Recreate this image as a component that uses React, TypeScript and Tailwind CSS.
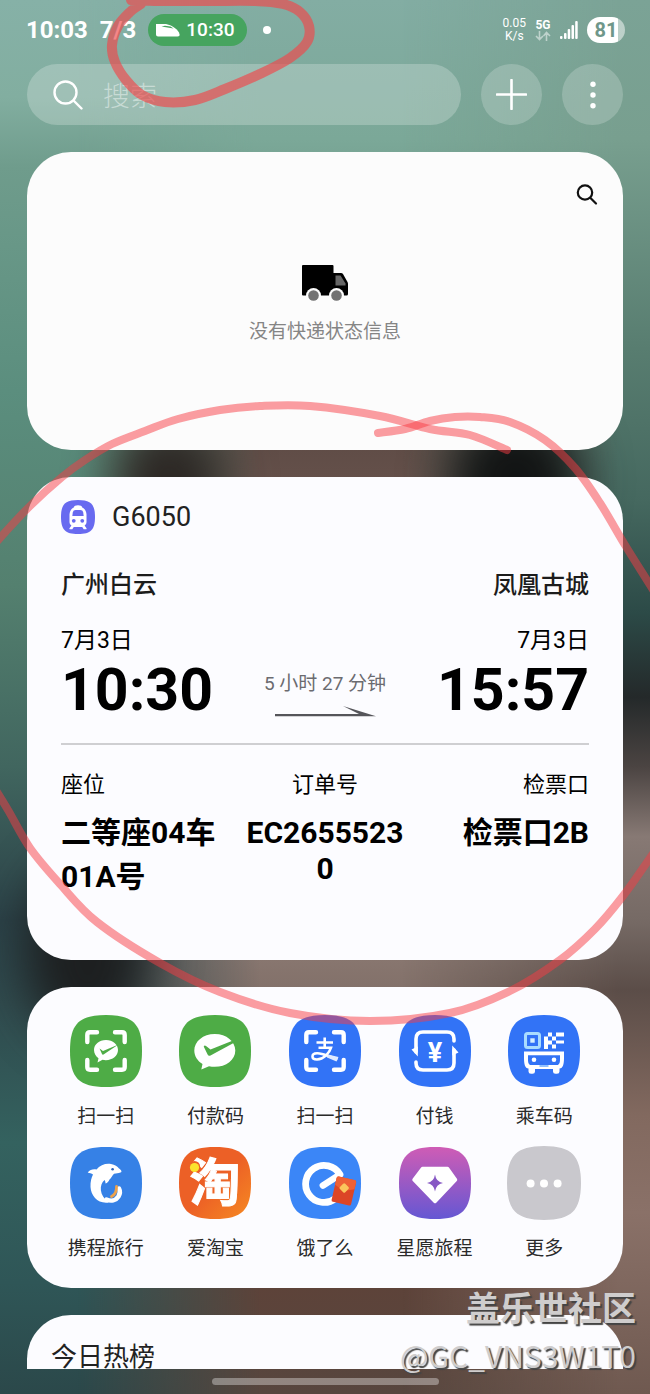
import type { ReactNode } from "react";

function Wallpaper() {
  return (
    <svg
      aria-hidden="true"
      className="absolute inset-0 -z-10 h-full w-full"
      viewBox="0 0 650 1394"
      preserveAspectRatio="none"
    >
      <defs>
        <linearGradient id="wl" x1="0" y1="0" x2="0" y2="1">
          <stop offset="0" stopColor="#86b1a7" />
          <stop offset=".07" stopColor="#82aea0" />
          <stop offset=".12" stopColor="#6f9c8c" />
          <stop offset=".28" stopColor="#5b8e7e" />
          <stop offset=".42" stopColor="#54806f" />
          <stop offset=".55" stopColor="#41665f" />
          <stop offset=".66" stopColor="#2b4248" />
          <stop offset=".72" stopColor="#304b4e" />
          <stop offset=".82" stopColor="#34625f" />
          <stop offset=".92" stopColor="#2f5657" />
          <stop offset="1" stopColor="#2b484a" />
        </linearGradient>
        <linearGradient id="wc" x1="0" y1="0" x2="0" y2="1">
          <stop offset="0" stopColor="#83ada3" />
          <stop offset=".1" stopColor="#7ba898" />
          <stop offset=".22" stopColor="#5f8777" />
          <stop offset=".3" stopColor="#5c4a44" />
          <stop offset=".36" stopColor="#67524c" />
          <stop offset=".68" stopColor="#8a7871" />
          <stop offset=".73" stopColor="#7d6c65" />
          <stop offset=".9" stopColor="#5f4238" />
          <stop offset="1" stopColor="#57463e" />
        </linearGradient>
        <linearGradient id="wr" x1="0" y1="0" x2="0" y2="1">
          <stop offset="0" stopColor="#7ba396" />
          <stop offset=".1" stopColor="#789f8f" />
          <stop offset=".25" stopColor="#587d70" />
          <stop offset=".36" stopColor="#45685f" />
          <stop offset=".44" stopColor="#2c4a47" />
          <stop offset=".5" stopColor="#24292a" />
          <stop offset=".55" stopColor="#4b4442" />
          <stop offset=".6" stopColor="#877974" />
          <stop offset=".66" stopColor="#766a65" />
          <stop offset=".71" stopColor="#5b4d48" />
          <stop offset=".8" stopColor="#82695f" />
          <stop offset=".87" stopColor="#8a7168" />
          <stop offset="1" stopColor="#6f5950" />
        </linearGradient>
        <linearGradient id="mcg">
          <stop offset=".12" stopColor="#000" />
          <stop offset=".4" stopColor="#fff" />
        </linearGradient>
        <linearGradient id="mrg">
          <stop offset=".62" stopColor="#000" />
          <stop offset=".95" stopColor="#fff" />
        </linearGradient>
        <mask id="mc">
          <rect width="650" height="1394" fill="url(#mcg)" />
        </mask>
        <mask id="mr">
          <rect width="650" height="1394" fill="url(#mrg)" />
        </mask>
        <filter id="soft" x="-100%" y="-100%" width="300%" height="300%" colorInterpolationFilters="sRGB">
          <feGaussianBlur stdDeviation="24" />
        </filter>
      </defs>
      <rect width="650" height="1394" fill="url(#wl)" />
      <rect width="650" height="1394" fill="url(#wc)" mask="url(#mc)" />
      <rect width="650" height="1394" fill="url(#wr)" mask="url(#mr)" />
      <g filter="url(#soft)">
        <ellipse cx="515" cy="480" rx="66" ry="70" fill="#121414" />
        <ellipse cx="170" cy="480" rx="56" ry="60" fill="#2c2724" />
        <ellipse cx="88" cy="950" rx="62" ry="90" fill="#1d1f20" />
      </g>
    </svg>
  );
}

type Point = [number, number];

/** Catmull-Rom curve through every point, as cubic segments. */
function smooth(points: Point[]) {
  let d = `M${points[0][0]} ${points[0][1]}`;
  for (let i = 0; i < points.length - 1; i++) {
    const p0 = points[i - 1] ?? points[i];
    const p1 = points[i];
    const p2 = points[i + 1];
    const p3 = points[i + 2] ?? p2;
    d += `C${p1[0] + (p2[0] - p0[0]) / 6} ${p1[1] + (p2[1] - p0[1]) / 6} ${p2[0] - (p3[0] - p1[0]) / 6} ${p2[1] - (p3[1] - p1[1]) / 6} ${p2[0]} ${p2[1]}`;
  }
  return d;
}

const pillLoop: Point[] = [
  [131, 0], [160, 1], [210, 1], [255, 1], [283, 4], [300, 12], [309, 26], [307, 42], [290, 58],
  [262, 73], [225, 89], [195, 100], [165, 102], [142, 95], [126, 80], [115, 62], [112, 45], [118, 26], [130, 12], [141, 4],
];

const ticketStrokes: Point[][] = [
  [[507, 450], [470, 435], [430, 429], [380, 416], [310, 406], [260, 406], [220, 410], [178, 419], [145, 431], [112, 444], [85, 460], [62, 477], [30, 506], [0, 538], [-8, 548]],
  [[378, 433], [405, 429], [430, 421], [455, 417], [480, 417], [510, 422], [545, 440], [575, 468], [600, 503], [625, 545], [650, 585], [658, 598]],
  [[-8, 784], [8, 810], [30, 848], [60, 884], [97, 922], [160, 963], [220, 992], [290, 1013], [370, 1021], [450, 1013], [510, 991], [560, 960], [595, 929], [623, 896], [650, 858], [658, 846]],
];

function Annotations() {
  return (
    <svg
      aria-hidden="true"
      className="pointer-events-none absolute inset-0 z-10 h-full w-full"
      viewBox="0 0 650 1394"
      preserveAspectRatio="none"
      fill="none"
      strokeLinecap="round"
      strokeLinejoin="round"
    >
      <path d={smooth(pillLoop)} stroke="#f0484a" strokeOpacity=".66" strokeWidth="10" />
      {ticketStrokes.map((points, i) => (
        <path key={i} d={smooth(points)} stroke="#f83c43" strokeOpacity=".5" strokeWidth="8" />
      ))}
    </svg>
  );
}

const SQUIRCLE =
  "M0 36C0 9 9 0 36 0S72 9 72 36 63 72 36 72 0 63 0 36Z";

function Tile({ fill, children }: { fill: string; children: ReactNode }) {
  return (
    <svg
      aria-hidden="true"
      viewBox="0 0 72 72"
      className="size-[72px] overflow-visible"
      fill="none"
    >
      <path d={SQUIRCLE} fill={fill} />
      {children}
    </svg>
  );
}

function Brackets() {
  return (
    <path
      d="M27 17.3H20Q17.3 17.3 17.3 20V27M45 17.3H52Q54.7 17.3 54.7 20V27M27 54.7H20Q17.3 54.7 17.3 52V45M45 54.7H52Q54.7 54.7 54.7 52V45"
      stroke="#fff"
      strokeWidth="4.4"
      strokeLinecap="round"
    />
  );
}

const icons = {
  wechatScan: (
    <Tile fill="#4eac46">
      <Brackets />
      <path d="M36 25C29 25 24 29.500 24 35C24 38.500 26 41.500 28.500 43.200L27.500 47.500L32.500 44.800C41 46.500 48 41.500 48 35C48 29.500 43 25 36 25Z" fill="#fff" />
      <path d="M29.500 33.500L33 36L48.500 29.500L33.500 39.500Q32.500 40 32 39Z" fill="#4eac46" />
    </Tile>
  ),
  wechatPay: (
    <Tile fill="#4eac46">
      <path d="M35.800 19C24 19 15.300 26.500 15.300 35.500C15.300 41 18.500 46 23.500 49L22.300 54.500L30 51.300C44 54 56.300 46.500 56.300 35.500C56.300 26.500 47.500 19 35.800 19Z" fill="#fff" />
      <path d="M24.700 31.500Q25.500 30 27 31L31.500 34.500L54 25.500L55.500 27.500L31.500 40.500Q29.500 41.500 28.600 39.500Z" fill="#4eac46" />
    </Tile>
  ),
  alipayScan: (
    <Tile fill="#3273f6">
      <Brackets />
      <path
        d="M27.500 27.500H44M35.700 22.500V32.500M29.500 32.700H42C40.500 38 34.500 44.500 28 44.500C22 44.500 22 38.500 28 38.300C34 38 40 42 48.500 44"
        stroke="#fff"
        strokeWidth="2.600"
      />
      <path d="M39 39.500L49.500 42L47.500 46.500L38 42.500Z" fill="#dfeaff" />
    </Tile>
  ),
  alipayPay: (
    <Tile fill="#3273f6">
      <g stroke="#fff" strokeWidth="3.600" strokeLinecap="round">
        <path d="M17 37V24Q17 17 24 17H48Q55 17 55 24V26" />
        <path d="M55 35V48Q55 55 48 55H24Q17 55 17 48V47" />
      </g>
      <path d="M18.800 41.500L12.500 34.500L18.800 31.500ZM53.200 30.500L59.500 37.500L53.200 40.500Z" fill="#fff" />
      <text x="36" y="46.500" textAnchor="middle" fill="#fff" fontSize="27" fontWeight="700" fontFamily="Roboto, sans-serif">
        ¥
      </text>
    </Tile>
  ),
  busCode: (
    <Tile fill="#3273f6">
      <rect x="17.500" y="18.500" width="14" height="14" rx="2" stroke="#a9dcff" strokeWidth="3" />
      <rect x="22.300" y="23.300" width="4.400" height="4.400" fill="#d5efff" />
      <path
        d="M40 17.500H44V21.500H40ZM48 17.500H56V21.500H48ZM44 21.500H48V25.500H44ZM36 21.500H40V34H36ZM40 25.500H44V29.500H40ZM48 25.500H56V28.500H48ZM44 29.500H48V33.500H44Z"
        fill="#fff"
      />
      <path
        fillRule="evenodd"
        d="M16 36.500H56V43C56 49 55 53.500 51.500 53.500V56.500Q51.500 58.800 49 58.800H47.500Q45 58.800 45 56.500V54H27V56.500Q27 58.800 24.500 58.800H23Q20.500 58.800 20.500 56.500V53.500C17 53.500 16 49 16 43ZM20 40.200V44C20 47.500 20.600 50 23 50H49C51.400 50 52 47.500 52 44V40.200Z"
        fill="#fff"
      />
      <circle cx="26" cy="44.800" r="2.300" fill="#fff" />
      <circle cx="46" cy="44.800" r="2.300" fill="#fff" />
      <rect x="31.500" y="50" width="9" height="2" fill="#8fc0ff" />
    </Tile>
  ),
  ctrip: (
    <Tile fill="#3681e6">
      <path
        d="M17.700 25.500C20 22.500 23 22 26.500 22.500C30 18 36 16 41 17C45 17.600 47.500 19.500 49 21.500C51.500 23 52.300 25 50.500 25.500C48 26.500 46.500 26 44 26.800C42 29 41.500 31 39.500 32.500C38.500 34.500 37.500 36 35.500 36.500C35.500 34.500 35 33.500 34.500 33C29 38 29 48 38.500 55.500C28 57 21 49 20.500 40C20.300 34.500 21.500 30.500 23 27.500C21.500 26.500 19.500 26 17.700 25.500Z"
        fill="#fff"
      />
      <path d="M36.500 52.500C41 54.500 46 53.500 48.500 49.500C50 47 50.300 44 49 41.500" stroke="#fff" strokeWidth="4.500" strokeLinecap="round" />
      <path d="M46.500 39.500C46.800 44 45 47.500 41.500 49.500" stroke="#eda24c" strokeWidth="2.800" strokeLinecap="round" />
      <circle cx="42.600" cy="22.300" r="1.300" fill="#2b62b8" />
    </Tile>
  ),
  taobao: (
    <Tile fill="url(#tb)">
      <defs>
        <linearGradient id="tb" x1="0" y1="0" x2="1" y2="1">
          <stop offset=".5" stopColor="#ec6026" />
          <stop offset="1" stopColor="#f68a22" />
        </linearGradient>
      </defs>
      <text
        x="36"
        y="54"
        textAnchor="middle"
        fill="#fff"
        stroke="#fff"
        strokeWidth="1"
        fontSize="51"
        fontWeight="700"
        fontFamily="'Noto Sans CJK SC', sans-serif"
      >
        淘
      </text>
      <circle cx="15.500" cy="19.500" r="5.600" fill="#ec6026" />
      <circle cx="15.500" cy="20.500" r="4.600" fill="#fbe32d" />
    </Tile>
  ),
  eleme: (
    <Tile fill="#3b86f7">
      <path d="M34 38.500L51 27.500A18.500 18.500 0 1 0 46.500 51.500" stroke="#fff" strokeWidth="6.800" strokeLinecap="round" strokeLinejoin="round" />
      <g transform="rotate(13 55 43.500)">
        <rect x="45" y="31" width="20" height="26" rx="1.800" fill="#dc4526" />
        <path d="M45 33Q45 31 47 31H63Q65 31 65 33V40L55 44L45 40Z" fill="#ee6136" />
        <rect x="51" y="37.500" width="7.500" height="7.500" rx="1.500" fill="#fbc65c" transform="rotate(32 55 41)" />
      </g>
    </Tile>
  ),
  starTrip: (
    <Tile fill="url(#st)">
      <defs>
        <linearGradient id="st" x1="0" y1="0" x2="0" y2="1">
          <stop offset="0" stopColor="#cf5cb5" />
          <stop offset="1" stopColor="#6557d3" />
        </linearGradient>
      </defs>
      <path d="M23.500 21.500H48.500L56.500 32.800L36 54.500L15 32.800Z" fill="#fff" stroke="#fff" strokeWidth="3.500" strokeLinejoin="round" />
      <path d="M36 27.500Q37 34.800 44 36Q37 37.200 36 44.500Q35 37.200 28 36Q35 34.800 36 27.500Z" fill="#8758c4" />
    </Tile>
  ),
  more: (
    <Tile fill="none">
      <path d={SQUIRCLE} fill="#c9c8cd" stroke="#c9c8cd" strokeWidth="2" />
      <circle cx="22.600" cy="36.500" r="4" fill="#fff" />
      <circle cx="36" cy="36.500" r="4" fill="#fff" />
      <circle cx="49.600" cy="36.500" r="4" fill="#fff" />
    </Tile>
  ),
};

const shortcuts: { label: string; icon: ReactNode }[] = [
  { label: "扫一扫", icon: icons.wechatScan },
  { label: "付款码", icon: icons.wechatPay },
  { label: "扫一扫", icon: icons.alipayScan },
  { label: "付钱", icon: icons.alipayPay },
  { label: "乘车码", icon: icons.busCode },
  { label: "携程旅行", icon: icons.ctrip },
  { label: "爱淘宝", icon: icons.taobao },
  { label: "饿了么", icon: icons.eleme },
  { label: "星愿旅程", icon: icons.starTrip },
  { label: "更多", icon: icons.more },
];

function StatusBar() {
  return (
    <header className="flex h-[60px] items-center justify-between pr-[25px] pl-[26px] text-white">
      <div className="flex items-center gap-3 text-2xl font-bold">
        <span>10:03</span>
        <span>7/3</span>
        <span className="flex h-8 items-center gap-1.5 rounded-full bg-[#46a45f] pr-3 pl-2 text-[19px] font-medium">
          <svg aria-hidden="true" viewBox="0 0 24 13" className="h-[13px] w-6" fill="#fff">
            <path d="M0 0H10C17 1.500 22 5.500 23.500 10Q24 12.500 21.500 12.500H2Q0 12.500 0 10.500Z" />
            <path d="M5.500 2.500L17.500 4.600L14.500 2.600L9 1.800Z" fill="#46a45f" />
          </svg>
          10:30
        </span>
        <span className="ml-1 size-2 rounded-full bg-white" />
      </div>
      <div className="flex items-center gap-[9px]">
        <span className="text-center text-xs leading-[13px]">
          0.05
          <br />
          K/s
        </span>
        <span className="flex flex-col items-center text-xs leading-3 font-bold">
          5G
          <svg aria-hidden="true" viewBox="0 0 16 10" className="h-2.5 w-4" fill="none" stroke="#fff" strokeOpacity=".5" strokeWidth="1.600">
            <path d="M4.500 0V8.500M1 5L4.500 8.500L8 5M11.500 10V1.500M8.500 5L11.500 1.500L15 5" />
          </svg>
        </span>
        <svg aria-hidden="true" viewBox="0 0 18 18" className="size-[18px]" fill="#fff">
          <rect x="0" y="15" width="2.500" height="3" rx="1" />
          <rect x="4" y="12" width="2.500" height="6" rx="1" />
          <rect x="7.700" y="8" width="2.500" height="10" rx="1" />
          <rect x="11.500" y="4" width="2.500" height="14" rx="1" />
          <rect x="15.200" y="0" width="2.500" height="18" rx="1" />
        </svg>
        <span className="flex h-[26px] w-[38px] items-center justify-center rounded-full bg-linear-to-r from-white from-82% to-white/50 to-82% text-xl font-bold text-[#6f978a]">
          81
        </span>
      </div>
    </header>
  );
}

function SearchRow() {
  return (
    <div className="flex gap-5 pt-1">
      <div className="flex h-[61px] min-w-0 flex-1 items-center gap-5 rounded-full bg-white/23 pr-6 pl-[26px]">
        <svg aria-hidden="true" viewBox="0 0 30 30" className="size-[30px] shrink-0" fill="none" stroke="#fff" strokeWidth="2.400" strokeLinecap="round">
          <circle cx="12.500" cy="12.500" r="11" />
          <path d="M20.500 20.500L28.500 28.500" />
        </svg>
        <input
          type="search"
          aria-label="搜索"
          placeholder="搜索"
          className="h-11 min-w-0 flex-1 bg-transparent pt-1 text-[27px] font-light text-white outline-none placeholder:text-white/45"
        />
      </div>
      <button type="button" aria-label="添加" className="flex size-[61px] items-center justify-center rounded-full bg-white/20">
        <svg aria-hidden="true" viewBox="0 0 31 31" className="size-[31px]" stroke="#fff" strokeWidth="2.600" strokeLinecap="round">
          <path d="M15.500 1V30M1 15.500H30" />
        </svg>
      </button>
      <button type="button" aria-label="更多选项" className="flex size-[61px] items-center justify-center rounded-full bg-white/20">
        <svg aria-hidden="true" viewBox="0 0 6 28" className="h-7 w-1.5" fill="#fff">
          <circle cx="3" cy="3.300" r="2.700" />
          <circle cx="3" cy="14" r="2.700" />
          <circle cx="3" cy="24.700" r="2.700" />
        </svg>
      </button>
    </div>
  );
}

function ParcelCard() {
  return (
    <section className="flex min-h-[298px] flex-col rounded-[44px] bg-[#fcfcfc] px-6 pt-[31px]">
      <button type="button" aria-label="查询快递" className="self-end">
        <svg aria-hidden="true" viewBox="0 0 24 24" className="size-6" fill="none" stroke="#111" strokeWidth="2.200" strokeLinecap="round">
          <circle cx="10" cy="9.500" r="7.200" />
          <path d="M15.500 15L21 20.500" />
        </svg>
      </button>
      <div className="flex flex-col items-center gap-3.5 pt-[57px]">
        <svg aria-hidden="true" viewBox="0 0 47 38" className="h-[38px] w-[47px]">
          <path d="M0 2Q0 1 1 1H30.500Q31.500 1 31.500 2V9H39Q40.300 9 41 10L45.500 18Q46 19 46 20V30Q46 31.500 44.500 31.500H1Q0 31.500 0 30.500Z" fill="#000" />
          <path d="M33.500 11.500H38.500L43.500 19.500V21.500H33.500Z" fill="#666" />
          <circle cx="11.500" cy="31.500" r="7.500" fill="#fcfcfc" />
          <circle cx="34.500" cy="31.500" r="7.500" fill="#fcfcfc" />
          <circle cx="11.500" cy="31.500" r="5.300" fill="#737373" />
          <circle cx="34.500" cy="31.500" r="5.300" fill="#737373" />
        </svg>
        <p className="text-[19px] leading-8 text-[#858585]">没有快递状态信息</p>
      </div>
    </section>
  );
}

function TrainCard() {
  return (
    <section className="min-h-[483px] rounded-[44px] bg-[#fcfcff] px-[34px] pt-[22px] pb-12 text-black">
      <h2 className="flex items-center gap-[17px] text-[27px] leading-9 text-[#222]">
        <svg aria-hidden="true" viewBox="0 0 72 72" className="size-[34px]">
          <path d={SQUIRCLE} fill="#686af0" />
          <path
            fillRule="evenodd"
            d="M36 11Q44 11 45 16Q53 20 54 30V47Q54 52 50 54L54 60Q55 62 52 62H48L45 57H27L24 62H20Q17 62 18 60L22 54Q18 52 18 47V30Q19 20 27 16Q28 11 36 11ZM25 26Q24 34 24 34H48Q48 34 47 26Q46 21 41 21H31Q26 21 25 26Z"
            fill="#fff"
          />
          <circle cx="27" cy="44" r="4" fill="#686af0" />
          <circle cx="45" cy="44" r="4" fill="#686af0" />
        </svg>
        G6050
      </h2>
      <div className="flex justify-between pt-8 text-2xl leading-9 font-medium text-[#1c1c1c]">
        <span>广州白云</span>
        <span>凤凰古城</span>
      </div>
      <div className="flex items-end justify-between pt-[22px]">
        <div>
          <p className="text-[23px] leading-8">7月3日</p>
          <p className="text-[59px] leading-[66px] font-bold">10:30</p>
        </div>
        <div className="flex flex-col items-center gap-2 pb-1.5 text-[#6b6b70]">
          <span className="text-[19px] leading-7">5 小时 27 分钟</span>
          <svg aria-hidden="true" viewBox="0 0 101 11" className="h-[11px] w-[101px]" fill="#55555a">
            <path d="M0 8H84L68 0L101 10.200H0Z" />
          </svg>
        </div>
        <div className="text-right">
          <p className="text-[23px] leading-8">7月3日</p>
          <p className="text-[59px] leading-[66px] font-bold">15:57</p>
        </div>
      </div>
      <hr className="mt-5 border-t-2 border-[#cfcfd2]" />
      <dl className="grid grid-cols-[160px_1fr_160px] pt-6">
        <div>
          <dt className="text-[22px] leading-8">座位</dt>
          <dd className="pt-2.5 text-[30px] leading-11 font-bold">
            二等座04车
            <br />
            01A号
          </dd>
        </div>
        <div className="text-center">
          <dt className="text-[22px] leading-8">订单号</dt>
          <dd className="pt-3.5 text-[30px] leading-9 font-bold">
            EC2655523
            <br />0
          </dd>
        </div>
        <div className="text-right">
          <dt className="text-[22px] leading-8">检票口</dt>
          <dd className="pt-2.5 text-[30px] leading-11 font-bold">检票口2B</dd>
        </div>
      </dl>
    </section>
  );
}

function ShortcutsCard() {
  return (
    <section className="grid min-h-[301px] grid-cols-5 content-start gap-y-3.5 rounded-[44px] bg-[#fcfcff] px-6 pt-7">
      {shortcuts.map((item, i) => (
        <button key={i} type="button" className="flex flex-col items-center gap-3.5 text-[19px] leading-8 whitespace-nowrap text-[#2a2a2a]">
          {item.icon}
          {item.label}
        </button>
      ))}
    </section>
  );
}

export default function App() {
  return (
    <div className="relative isolate flex min-h-screen flex-col overflow-hidden font-[Roboto,'Noto_Sans_CJK_SC',sans-serif]">
      <Wallpaper />
      <StatusBar />
      <main className="flex flex-1 flex-col gap-[27px] px-[27px]">
        <SearchRow />
        <ParcelCard />
        <TrainCard />
        <ShortcutsCard />
        <section className="flex-1 rounded-t-[44px] bg-[#fcfcff] px-6 pt-6">
          <h2 className="h-[30px] text-[26px] leading-9 text-[#222]">今日热榜</h2>
        </section>
      </main>
      <footer className="flex h-[25px] items-center justify-center">
        <span className="h-[7px] w-[227px] rounded-full bg-white/35" />
      </footer>
      <Annotations />
      <div className="pointer-events-none absolute right-3.5 bottom-4 z-20 text-right text-[#cfcdcd] [text-shadow:2px_2px_1px_#444]">
        <p className="text-[34px] leading-[46px] font-bold">盖乐世社区</p>
        <p className="font-['Noto_Sans_CJK_SC',sans-serif] text-[30px] leading-[46px]">@GC_VNS3W1T0</p>
      </div>
    </div>
  );
}
